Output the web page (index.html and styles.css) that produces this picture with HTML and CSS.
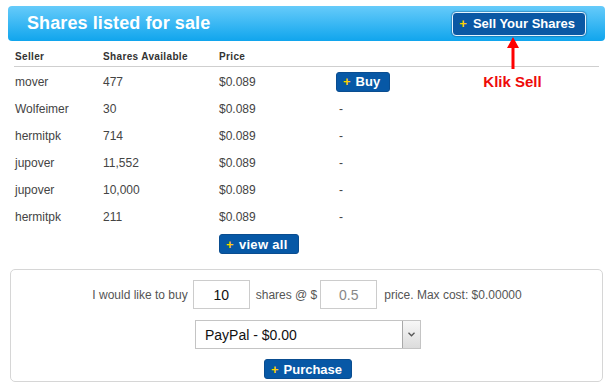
FILE: index.html
```html
<!DOCTYPE html>
<html>
<head>
<meta charset="utf-8">
<title>Shares listed for sale</title>
<link rel="stylesheet" href="styles.css">
</head>
<body>
<div class="page">
  <div class="panel-head">
    <h1 class="title">Shares listed for sale</h1>
    <a class="btn btn-sell"><span class="plus">+</span>Sell Your Shares</a>
  </div>

  <div class="listing">
    <div class="row row-head">
      <div>Seller</div><div>Shares Available</div><div>Price</div><div></div>
    </div>
    <div class="rows">
      <div class="row"><div>mover</div><div>477</div><div>$0.089</div><div><a class="btn btn-buy"><span class="plus">+</span>Buy</a></div></div>
      <div class="row"><div>Wolfeimer</div><div>30</div><div>$0.089</div><div class="dash">-</div></div>
      <div class="row"><div>hermitpk</div><div>714</div><div>$0.089</div><div class="dash">-</div></div>
      <div class="row"><div>jupover</div><div>11,552</div><div>$0.089</div><div class="dash">-</div></div>
      <div class="row"><div>jupover</div><div>10,000</div><div>$0.089</div><div class="dash">-</div></div>
      <div class="row"><div>hermitpk</div><div>211</div><div>$0.089</div><div class="dash">-</div></div>
    </div>
    <div class="viewall-row"><a class="btn btn-view"><span class="plus">+</span>view all</a></div>
  </div>

  <div class="buybox">
    <div class="buy-line">
      <span class="lbl">I would like to buy</span>
      <input class="qty" type="text" value="10">
      <span class="lbl lbl-mid">shares @ $</span>
      <input class="price" type="text" value="0.5">
      <span class="lbl lbl-end">price. Max cost: $0.00000</span>
    </div>
    <div class="fake-select">
      <span class="sel-text">PayPal - $0.00</span>
      <span class="sel-arrow"><svg width="7" height="5" viewBox="0 0 7 5"><path d="M0.5 0.8 L3.5 3.8 L6.5 0.8" fill="none" stroke="#555" stroke-width="1.3"/></svg></span>
    </div>
    <div class="purchase-row"><a class="btn btn-purchase"><span class="plus">+</span>Purchase</a></div>
  </div>

  <div class="annot">
    <svg class="arrow" width="14" height="33" viewBox="0 0 14 33">
      <polygon points="7,0 1,11 5.5,11 5.5,32 8.5,32 8.5,11 13,11" fill="#ff0000"/>
    </svg>
    <div class="annot-text">Klik Sell</div>
  </div>
</div>
</body>
</html>
```

FILE: styles.css
```css
html, body {
  margin: 0;
  padding: 0;
  background: #ffffff;
}

body {
  font-family: "Liberation Sans", Arial, sans-serif;
  color: #444;
}

.page {
  position: relative;
  width: 597px;
  padding: 6px 0 0 8px;
}

.panel-head {
  height: 35px;
  display: flex;
  align-items: center;
  justify-content: space-between;
  background: linear-gradient(#66cbfa, #10a5ed);
  border-radius: 4px;
}

.title {
  margin: 0 0 0 19px;
  font-size: 18px;
  font-weight: bold;
  color: #ffffff;
  letter-spacing: 0.1px;
}

.btn {
  display: inline-flex;
  align-items: center;
  box-sizing: border-box;
  height: 20px;
  padding: 0 9px 0 6px;
  background: #0758a6;
  border: 1px solid #0a4d90;
  border-radius: 3px;
  color: #ffffff;
  font-size: 13px;
  font-weight: bold;
  white-space: nowrap;
  text-decoration: none;
}

.plus {
  color: #ffd200;
  font-weight: bold;
  margin-right: 5px;
}

.btn-sell {
  height: 24px;
  margin-right: 19px;
  border: 1px solid #e6f4fd;
  border-radius: 4px;
  box-shadow: 0 0 1px 1px rgba(0, 60, 120, 0.35);
  background: #0a58a4;
  padding: 0 10px 0 6px;
}

.btn-sell .plus {
  margin-right: 6px;
}

.btn-view {
  padding-right: 10px;
  letter-spacing: 0.3px;
}

.listing {
  margin-left: 6px;
  width: 585px;
}

.row {
  display: grid;
  grid-template-columns: 89px 116px 117px 1fr;
  height: 27px;
  align-items: center;
  font-size: 12px;
  color: #444;
}

.row > div:first-child {
  padding-left: 1px;
}

.row-head {
  margin-top: 6px;
  height: 19px;
  border-bottom: 1px solid #cfcfcf;
  font-size: 10px;
  font-weight: bold;
  color: #333;
  letter-spacing: 0.35px;
}

.rows {
  margin-top: 1px;
}

.dash {
  padding-left: 3px;
}

.viewall-row {
  margin-top: 4px;
  padding-left: 205px;
  height: 20px;
  display: flex;
}

.buybox {
  margin: 15px 0 0 2px;
  width: 591px;
  height: 111px;
  box-sizing: content-box;
  border: 1px solid #d6d6d6;
  border-radius: 5px;
  display: flex;
  flex-direction: column;
  align-items: center;
}

.buy-line {
  margin-top: 10px;
  height: 29px;
  display: flex;
  align-items: center;
  padding-left: 1px;
}

.lbl {
  font-size: 12px;
  color: #555;
  margin-right: 5px;
}

.lbl-mid {
  margin: 0 3px 0 6px;
}

.lbl-end {
  margin: 0 0 0 7px;
}

input {
  box-sizing: border-box;
  width: 57px;
  height: 29px;
  border: 1px solid #cccccc;
  border-radius: 0;
  font-family: "Liberation Sans", Arial, sans-serif;
  font-size: 14px;
  text-align: center;
  padding: 0;
  outline: none;
}

.qty {
  color: #111;
}

.price {
  color: #888;
}

.fake-select {
  margin-top: 11px;
  margin-left: 3px;
  box-sizing: border-box;
  width: 226px;
  height: 29px;
  border: 1px solid #c4c4c4;
  display: flex;
  align-items: stretch;
  background: #ffffff;
}

.sel-text {
  flex: 1;
  display: flex;
  align-items: center;
  padding-left: 9px;
  font-size: 14px;
  color: #111;
}

.sel-arrow {
  width: 17px;
  display: flex;
  align-items: center;
  justify-content: center;
  border-left: 1px solid #a9a9a9;
  background: linear-gradient(#f7f7f7, #dcdcdc);
}

.purchase-row {
  margin-top: 10px;
  margin-left: 3px;
  display: flex;
}

.annot {
  position: absolute;
  left: 475px;
  top: 37px;
  width: 75px;
  display: flex;
  flex-direction: column;
  align-items: center;
}

.arrow {
  display: block;
}

.annot-text {
  margin-top: 3px;
  font-size: 15px;
  font-weight: bold;
  color: #ee0a0a;
  white-space: nowrap;
}
```
